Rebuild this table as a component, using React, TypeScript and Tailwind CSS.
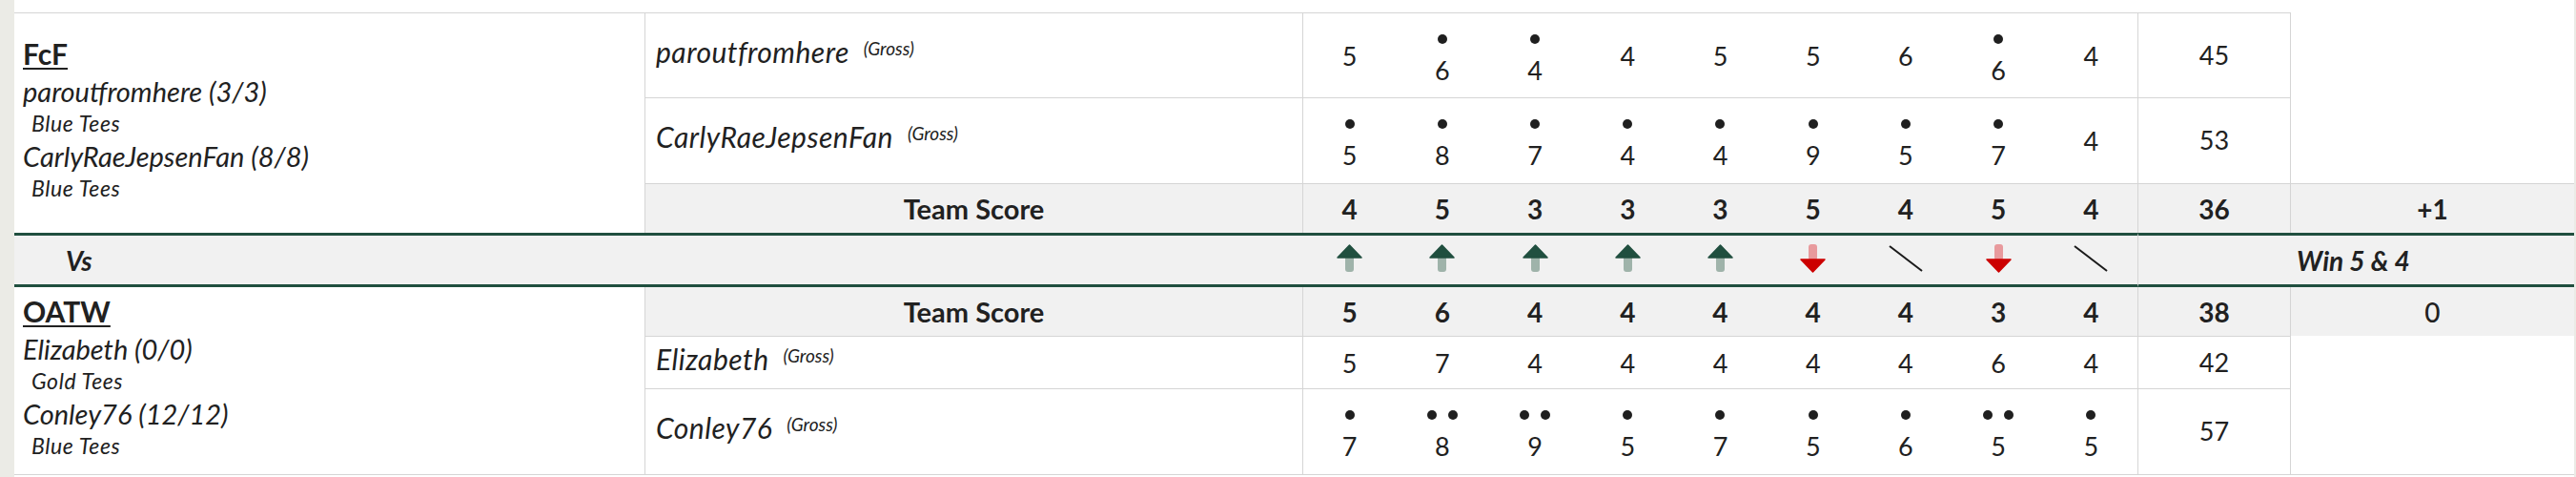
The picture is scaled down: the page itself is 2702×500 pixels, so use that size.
import React from "react";

type Hole = { n: number; dots?: number };

const LINE = "border-[#d5d5d5]";
const GREEN = "#204f3f";

const top = {
  team: "FcF",
  players: [
    { name: "paroutfromhere", hcp: "(3/3)", tees: "Blue Tees" },
    { name: "CarlyRaeJepsenFan", hcp: "(8/8)", tees: "Blue Tees" },
  ],
  rows: [
    {
      name: "paroutfromhere",
      holes: [
        { n: 5 },
        { n: 6, dots: 1 },
        { n: 4, dots: 1 },
        { n: 4 },
        { n: 5 },
        { n: 5 },
        { n: 6 },
        { n: 6, dots: 1 },
        { n: 4 },
      ],
      total: 45,
    },
    {
      name: "CarlyRaeJepsenFan",
      holes: [
        { n: 5, dots: 1 },
        { n: 8, dots: 1 },
        { n: 7, dots: 1 },
        { n: 4, dots: 1 },
        { n: 4, dots: 1 },
        { n: 9, dots: 1 },
        { n: 5, dots: 1 },
        { n: 7, dots: 1 },
        { n: 4 },
      ],
      total: 53,
    },
  ],
  teamScore: [4, 5, 3, 3, 3, 5, 4, 5, 4],
  teamTotal: 36,
  result: "+1",
};

const bottom = {
  team: "OATW",
  players: [
    { name: "Elizabeth", hcp: "(0/0)", tees: "Gold Tees" },
    { name: "Conley76", hcp: "(12/12)", tees: "Blue Tees" },
  ],
  rows: [
    {
      name: "Elizabeth",
      holes: [5, 7, 4, 4, 4, 4, 4, 6, 4].map((n) => ({ n })),
      total: 42,
    },
    {
      name: "Conley76",
      holes: [
        { n: 7, dots: 1 },
        { n: 8, dots: 2 },
        { n: 9, dots: 2 },
        { n: 5, dots: 1 },
        { n: 7, dots: 1 },
        { n: 5, dots: 1 },
        { n: 6, dots: 1 },
        { n: 5, dots: 2 },
        { n: 5, dots: 1 },
      ],
      total: 57,
    },
  ],
  teamScore: [5, 6, 4, 4, 4, 4, 4, 3, 4],
  teamTotal: 38,
  result: "0",
};

const holeResults: ("up" | "down" | "half")[] = [
  "up",
  "up",
  "up",
  "up",
  "up",
  "down",
  "half",
  "down",
  "half",
];

const UpArrow = () => (
  <svg width="27" height="30" viewBox="0 0 27 30">
    <rect x="9" y="12" width="9" height="17" rx="3" fill="#9fb3aa" />
    <path
      d="M13.5 1 L26 14 L1 14 Z"
      fill={GREEN}
      stroke={GREEN}
      strokeWidth="1.5"
      strokeLinejoin="round"
    />
  </svg>
);

const DownArrow = () => (
  <svg width="27" height="30" viewBox="0 0 27 30">
    <rect x="9" y="0" width="9" height="17" rx="3" fill="#e89a9d" />
    <path
      d="M1 16 L26 16 L13.5 29 Z"
      fill="#cc0000"
      stroke="#cc0000"
      strokeWidth="1.5"
      strokeLinejoin="round"
    />
  </svg>
);

const Halved = () => (
  <svg width="36" height="30" viewBox="0 0 36 30">
    <line x1="1" y1="2" x2="35" y2="28" stroke="#1a1a1a" strokeWidth="2" />
  </svg>
);

const Dots = ({ count }: { count: number }) => (
  <div className="h-[30px] flex items-center justify-center gap-[12px]">
    {Array.from({ length: count }).map((_, i) => (
      <span key={i} className="w-[10px] h-[10px] rounded-full bg-[#1f1f1f]" />
    ))}
  </div>
);

const TeamCell = ({
  team,
  players,
  rowClass,
}: {
  team: string;
  players: { name: string; hcp: string; tees: string }[];
  rowClass: string;
}) => (
  <div
    className={`${rowClass} col-start-1 row-span-3 flex flex-col justify-center pl-[9px] pb-[6px] bg-white border-r ${LINE}`}
  >
    <div className="text-[30px] leading-[34px] font-bold underline decoration-2 underline-offset-[3px] mb-[4px] w-fit">
      {team}
    </div>
    {players.map((p) => (
      <div key={p.name}>
        <div className="italic text-[29px] leading-[37px]">
          {p.name} {p.hcp}
        </div>
        <div className="italic text-[23px] leading-[31px] tracking-[0.6px] pl-[9px]">
          {p.tees}
        </div>
      </div>
    ))}
  </div>
);

const PlayerRow = ({
  name,
  holes,
  total,
  last,
}: {
  name: string;
  holes: Hole[];
  total: number;
  last?: boolean;
}) => {
  const edge = `border-t ${LINE} ${last ? "border-b" : ""}`;
  return (
    <>
      <div
        className={`col-start-2 flex items-center pl-[11px] pb-[4px] bg-white border-r ${edge}`}
      >
        <span className="italic text-[30px] leading-[40px] tracking-[0.5px]">
          {name}
          <span className="relative -top-[8px] ml-[15px] text-[19px] tracking-normal">
            (Gross)
          </span>
        </span>
      </div>
      {holes.map((h, i) => (
        <div
          key={i}
          className={`flex flex-col items-center justify-center bg-white ${edge}`}
        >
          {h.dots ? <Dots count={h.dots} /> : null}
          <div className="text-[27px] leading-[35px]">{h.n}</div>
        </div>
      ))}
      <div
        className={`flex items-center justify-center text-[27px] bg-white border-l border-r ${edge}`}
      >
        {total}
      </div>
    </>
  );
};

const TeamScoreRow = ({
  scores,
  total,
  result,
  withTop,
  resultBold,
}: {
  scores: number[];
  total: number;
  result: string;
  withTop: boolean;
  resultBold: boolean;
}) => {
  const edge = withTop ? `border-t ${LINE}` : "";
  return (
    <>
      <div
        className={`col-start-2 flex items-center justify-center bg-[#f1f1f1] font-bold text-[29px] border-r ${LINE} ${edge}`}
      >
        Team Score
      </div>
      {scores.map((s, i) => (
        <div
          key={i}
          className={`flex items-center justify-center bg-[#f1f1f1] font-bold text-[28px] ${edge}`}
        >
          {s}
        </div>
      ))}
      <div
        className={`flex items-center justify-center bg-[#f1f1f1] font-bold text-[28px] border-l border-r ${LINE} ${edge}`}
      >
        {total}
      </div>
      <div
        className={`flex items-center justify-center bg-[#f1f1f1] text-[28px] ${
          resultBold ? "font-bold" : "font-medium"
        } ${edge}`}
      >
        {result}
      </div>
    </>
  );
};

export default function App() {
  const vsEdge =
    "bg-[#f1f1f1] border-t-[3px] border-b-[3px] border-t-[#204f3f] border-b-[#204f3f]";
  return (
    <div
      className="w-[2702px] h-[500px] bg-[#ebebe6] flex text-[#212121]"
      style={{ fontFamily: "Lato, 'Open Sans', sans-serif" }}
    >
      <div className="ml-[15px] mr-[2px] flex-1 bg-white pt-[13px]">
        <div className="grid grid-cols-[662px_690px_repeat(9,minmax(0,1fr))_161px_297px] grid-rows-[89px_90px_52px_57px_51px_55px_91px]">
          {/* top team */}
          <TeamCell
            team={top.team}
            players={top.players}
            rowClass={`row-start-1 border-t ${LINE}`}
          />
          <PlayerRow {...top.rows[0]} />
          <div className="row-span-2 bg-white" />
          <PlayerRow {...top.rows[1]} />
          <TeamScoreRow
            scores={top.teamScore}
            total={top.teamTotal}
            result={top.result}
            withTop
            resultBold
          />

          {/* vs row */}
          <div
            className={`col-start-1 col-span-2 flex items-center pl-[54px] italic font-bold text-[28px] ${vsEdge}`}
          >
            Vs
          </div>
          {holeResults.map((r, i) => (
            <div
              key={i}
              className={`flex items-center justify-center pb-[4px] ${vsEdge}`}
            >
              {r === "up" ? <UpArrow /> : r === "down" ? <DownArrow /> : <Halved />}
            </div>
          ))}
          <div
            className={`col-span-2 flex items-center justify-center pr-[6px] italic font-bold text-[28px] border-l ${LINE} ${vsEdge}`}
          >
            Win 5 &amp; 4
          </div>

          {/* bottom team */}
          <TeamCell
            team={bottom.team}
            players={bottom.players}
            rowClass={`row-start-5 border-b ${LINE}`}
          />
          <TeamScoreRow
            scores={bottom.teamScore}
            total={bottom.teamTotal}
            result={bottom.result}
            withTop={false}
            resultBold={false}
          />
          <PlayerRow {...bottom.rows[0]} />
          <div className={`row-span-2 bg-white border-b ${LINE}`} />
          <PlayerRow {...bottom.rows[1]} last />
        </div>
      </div>
    </div>
  );
}
